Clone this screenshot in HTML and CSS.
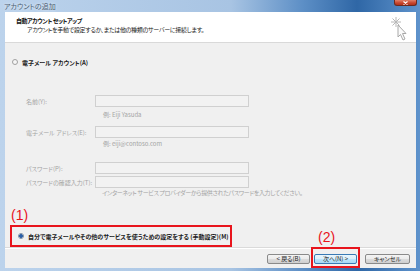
FILE: index.html
```html
<!DOCTYPE html>
<html lang="ja">
<head>
    <meta charset="UTF-8">
    <title>アカウントの追加</title>
    <link rel="stylesheet" href="styles.css">
</head>
<body>
    <div class="window">
        <div class="title-bar">
            <span class="title-text">アカウントの追加</span>
            <span class="close-btn">
                <svg width="7" height="4" viewBox="0 0 7 4">
                    <path d="M1.5 0.5 L5.5 3.5 M5.5 0.5 L1.5 3.5" stroke="#fff" stroke-width="1.2"/>
                </svg>
            </span>
        </div>

        <div class="client">
            <div class="header">
                <div class="header-text">
                    <div class="header-title">自動アカウント セットアップ</div>
                    <div class="header-sub">アカウントを手動で設定するか、または他の種類のサーバーに接続します。</div>
                </div>
                <svg class="wizard-icon" width="20" height="26" viewBox="0 0 20 26">
                    <g stroke="#b8b8b8" stroke-width="1" fill="none">
                        <line x1="6" y1="1" x2="6" y2="11"/>
                        <line x1="1" y1="6" x2="11" y2="6"/>
                        <line x1="2.5" y1="2.5" x2="9.5" y2="9.5"/>
                        <line x1="9.5" y1="2.5" x2="2.5" y2="9.5"/>
                    </g>
                    <path d="M8 9 L8 21 L10.5 18.5 L13 24 L15 23 L12.5 17.5 L16 17.5 Z" fill="#fafafa" stroke="#a8a8a8" stroke-width="1"/>
                </svg>
            </div>

            <div class="body">
                <div class="radio-row">
                    <span class="radio"></span>
                    <span class="radio-label">電子メール アカウント(A)</span>
                </div>

                <div class="field field-name">
                    <span class="field-label">名前(Y):</span>
                    <span class="input"></span>
                </div>
                <div class="hint hint-name">例: Eiji Yasuda</div>

                <div class="field field-mail">
                    <span class="field-label">電子メール アドレス(E):</span>
                    <span class="input"></span>
                </div>
                <div class="hint hint-mail">例: eiji@contoso.com</div>

                <div class="field field-pass">
                    <span class="field-label">パスワード(P):</span>
                    <span class="input"></span>
                </div>
                <div class="field field-confirm">
                    <span class="field-label">パスワードの確認入力(T):</span>
                    <span class="input"></span>
                </div>
                <div class="note">インターネット サービス プロバイダーから提供されたパスワードを入力してください。</div>

                <div class="step-mark">(1)</div>
                <div class="manual-box">
                    <span class="radio checked"></span>
                    <span class="radio-label">自分で電子メールやその他のサービスを使うための設定をする (手動設定)(M)</span>
                </div>
            </div>

            <div class="footer">
                <button class="btn">&lt; 戻る(B)</button>
                <div class="next-wrap">
                    <span class="step-mark step-two">(2)</span>
                    <button class="btn btn-default">次へ(N) &gt;</button>
                </div>
                <button class="btn btn-cancel">キャンセル</button>
            </div>
        </div>
    </div>
</body>
</html>
```

FILE: styles.css
```css
* {
    margin: 0;
    padding: 0;
    box-sizing: border-box;
}

body {
    width: 420px;
    height: 271px;
    overflow: hidden;
    font-family: "Noto Sans CJK JP", "Noto Sans", sans-serif;
    font-size: 6px;
    font-feature-settings: "palt";
    color: #222;
}

.window {
    width: 420px;
    height: 271px;
    display: flex;
    flex-direction: column;
    padding: 0 4px 3px 5px;
    background: linear-gradient(90deg, #bcd3ec 0%, #a8c4e3 55%, #5d8fc6 72%, #2f67a6 85%, #5f93cc 100%);
}

.title-bar {
    height: 13px;
    display: flex;
    justify-content: space-between;
    align-items: flex-start;
    margin-left: -1px;
}

.title-text {
    font-size: 7px;
    line-height: 12px;
    color: #4b5d72;
    text-shadow: 0 0 3px rgba(255, 255, 255, 0.9);
}

.close-btn {
    width: 23px;
    height: 6px;
    margin-right: -1px;
    display: flex;
    justify-content: center;
    align-items: center;
    background: linear-gradient(180deg, #e0806a 0%, #c7442c 60%, #b23520 100%);
    border: 1px solid #6e2a1e;
    border-top: none;
    border-radius: 0 0 3px 3px;
}

.client {
    flex: 1;
    display: flex;
    flex-direction: column;
    background: #f0f0f0;
}

.header {
    height: 31px;
    background: #fff;
    border-bottom: 1px solid #d9d9d9;
    display: flex;
    justify-content: space-between;
    padding: 4px 6px 0 11px;
}

.header-title {
    font-weight: bold;
    line-height: 9px;
    letter-spacing: -0.5px;
    color: #111;
}

.header-sub {
    padding-left: 11px;
    line-height: 9px;
    letter-spacing: -0.3px;
    color: #222;
}

.body {
    flex: 1;
    padding-top: 14px;
}

.radio-row {
    display: flex;
    align-items: center;
    height: 10px;
    padding-left: 7px;
}

.radio {
    width: 6px;
    height: 6px;
    border-radius: 50%;
    border: 1px solid #a0a0a0;
    background: #f6f6f6;
    margin-right: 4px;
    flex-shrink: 0;
}

.radio.checked {
    background: radial-gradient(circle, #2a5fa8 0 1.6px, #e8eef5 2px);
    border-color: #7c8ea3;
}

.radio-label {
    font-weight: bold;
    color: #1a1a1a;
    white-space: nowrap;
}

.field {
    display: grid;
    grid-template-columns: 69px 154px;
    align-items: center;
    padding-left: 21px;
    height: 12px;
}

.field-label {
    color: #a4a4a4;
    white-space: nowrap;
}

.input {
    height: 12px;
    border: 1px solid #d0d0d0;
    background: #f2f2f2;
}

.field-name { margin-top: 28px; }
.field-mail { margin-top: 6px; }
.field-pass { margin-top: 13px; }
.field-confirm { margin-top: 2px; }

.hint {
    height: 10px;
    line-height: 10px;
    padding-left: 98px;
    color: #a4a4a4;
}

.hint-name { margin-top: 3px; }
.hint-mail { margin-top: 1px; }

.note {
    height: 10px;
    line-height: 10px;
    padding-left: 97px;
    letter-spacing: -0.35px;
    color: #a4a4a4;
    white-space: nowrap;
}

.step-mark {
    color: #e8141c;
    font-family: "Liberation Sans", sans-serif;
    font-size: 14px;
    line-height: 15px;
    margin: 10px 0 0 6px;
}

.manual-box {
    width: 222px;
    height: 22px;
    margin: 2px 0 0 5px;
    border: 2px solid #e8141c;
    display: flex;
    align-items: center;
    padding-left: 6px;
}

.footer {
    height: 21px;
    border-top: 1px solid #dadada;
    box-shadow: inset 0 1px 0 #fff;
    display: flex;
    justify-content: flex-end;
    align-items: flex-start;
    padding: 6px 6px 0 0;
    gap: 4px;
}

.btn {
    height: 10px;
    width: 43px;
    font-family: inherit;
    font-size: 6px;
    font-feature-settings: "palt";
    line-height: 8px;
    color: #222;
    border: 1px solid #8a8a8a;
    border-radius: 2px;
    background: linear-gradient(180deg, #f4f4f4 0%, #ebebeb 50%, #dcdcdc 51%, #cfcfcf 100%);
}

.btn-default {
    border-color: #3a7bb5;
    background: linear-gradient(180deg, #eaf6fd 0%, #d9f0fc 50%, #bee6fd 51%, #a7d9f5 100%);
}

.btn-cancel {
    width: 45px;
    margin-left: 4px;
}

.next-wrap {
    position: relative;
    display: flex;
}

.next-wrap::before {
    content: "";
    position: absolute;
    left: -3px;
    right: -3px;
    top: -7px;
    bottom: -4px;
    border: 2px solid #e8141c;
}

.step-two {
    position: absolute;
    margin: 0;
    left: 4px;
    top: -24px;
}
```
